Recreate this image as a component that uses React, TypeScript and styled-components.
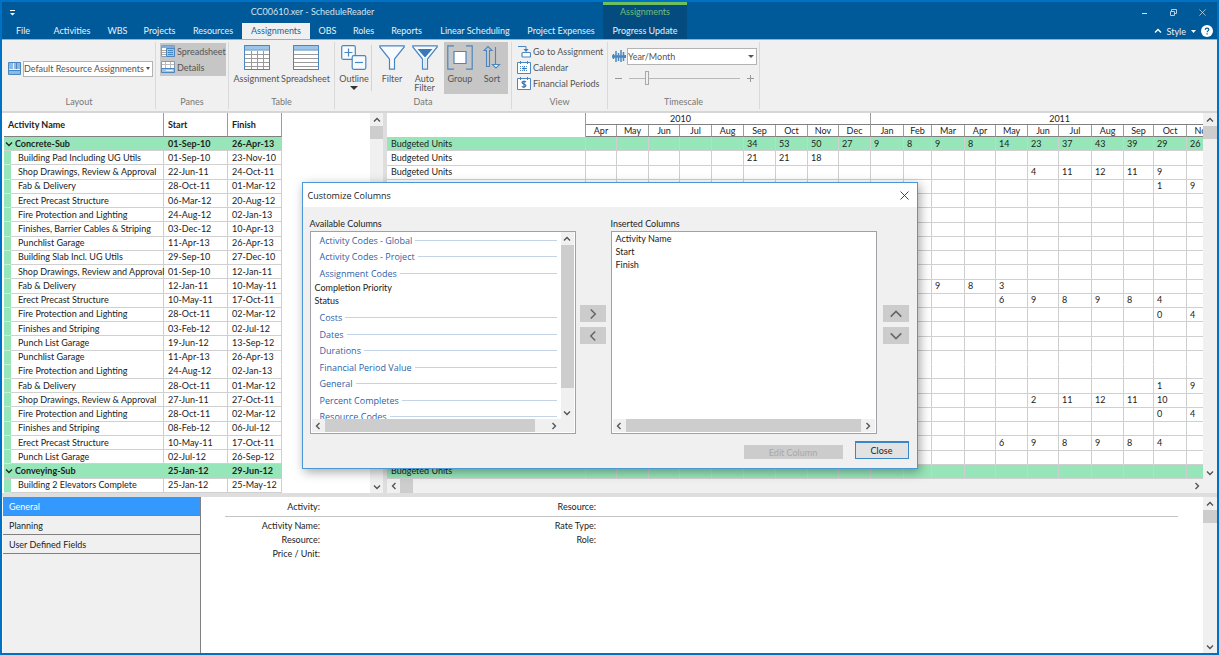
import React from 'react';
import styled, { createGlobalStyle, css } from 'styled-components';

const ui = `"Open Sans", "Noto Sans", sans-serif`;
const grid = `Lato, "Open Sans", sans-serif`;
const GREEN = '#97e6b9';
const BLUE = '#4a86c0';

const GlobalStyle = createGlobalStyle`
  *, *::before, *::after { box-sizing: border-box; }
  body { margin: 0; font-family: ${grid}; font-size: 9px; color: #222; background: #fff; }
  button, select, input { font: inherit; color: inherit; margin: 0; padding: 0; border: 0; background: none; }
  svg { display: block; flex: none; }
`;

const Frame = styled.div`
  height: 100vh;
  min-height: 400px;
  display: flex;
  flex-direction: column;
  border: 2px solid #0072c6;
  background: #f0f0f0;
  overflow: hidden;
  position: relative;
`;

/* ---------- title bar and tabs ---------- */

const TitleBar = styled.header`
  flex: 0 0 21px;
  display: flex;
  align-items: stretch;
  background: #005998;
  color: #d5e3ef;
`;
const QuickAccess = styled.button`
  width: 20px;
  display: flex;
  align-items: center;
  justify-content: center;
`;
const Title = styled.h1`
  width: 581px;
  margin: 0;
  font-size: 9px;
  font-weight: 400;
  line-height: 20px;
  text-align: center;
`;
const ContextTitle = styled.div`
  width: 84px;
  border-top: 3px solid #6fc05c;
  background: #044c80;
  color: #74bd78;
  text-align: center;
  line-height: 14px;
`;
const WindowButtons = styled.div`
  margin-left: auto;
  display: flex;
`;
const WindowButton = styled.button`
  width: 29px;
  display: flex;
  align-items: center;
  justify-content: center;
`;
const TabBar = styled.nav`
  flex: 0 0 16px;
  display: flex;
  background: #005998;
  color: #e8f0f7;
`;
const Tab = styled.button<{ $w: number; $active?: boolean; $context?: boolean }>`
  width: ${p => p.$w}px;
  line-height: 16px;
  white-space: nowrap;
  ${p => p.$active && css`background: #f0f0f0; color: #1f5f9c;`}
  ${p => p.$context && css`background: #044c80;`}
`;
const TabTools = styled.div`
  margin-left: auto;
  display: flex;
  align-items: center;
  gap: 5px;
  padding-right: 4px;
`;
const ToolButton = styled.button`
  display: flex;
  align-items: center;
  gap: 5px;
`;

/* ---------- ribbon ---------- */

const Ribbon = styled.div`
  flex: 0 0 74px;
  display: flex;
  border-top: 1px solid #8fb2cf;
  border-bottom: 2px solid #d6d6d6;
  padding: 2px 0 2px 1px;
  color: #555;
`;
const RibbonGroup = styled.section<{ $w: number }>`
  width: ${p => p.$w}px;
  display: flex;
  flex-direction: column;
  border-right: 1px solid #d9d9d9;
`;
const GroupBody = styled.div<{ $center?: boolean }>`
  flex: 1;
  display: flex;
  align-items: ${p => (p.$center ? 'center' : 'flex-start')};
`;
const GroupLabel = styled.h2`
  margin: 0;
  font-size: 9px;
  font-weight: 400;
  line-height: 14px;
  color: #777;
  text-align: center;
`;
const LayoutPicker = styled.label`
  display: flex;
  align-items: center;
  gap: 2px;
  padding-left: 5px;
`;
const Combo = styled.span<{ $w: number; $h: number }>`
  position: relative;
  width: ${p => p.$w}px;
  height: ${p => p.$h}px;
  display: flex;
  border: 1px solid #b3b3b3;
  background: #fff;
  > svg { position: absolute; right: 2px; top: 50%; margin-top: -2px; pointer-events: none; }
`;
const ComboSelect = styled.select`
  appearance: none;
  width: 100%;
  color: #555;
`;
const PaneToggles = styled.div`
  margin: 1px 0 0 4px;
  width: 66px;
  height: 33px;
  background: #c6c6c6;
`;
const SmallButton = styled.button`
  display: flex;
  align-items: center;
  gap: 2px;
  height: 16px;
  padding-left: 1px;
  white-space: nowrap;
`;
const BigButton = styled.button<{ $w: number; $pressed?: boolean }>`
  width: ${p => p.$w}px;
  height: 52px;
  display: flex;
  flex-direction: column;
  align-items: center;
  justify-content: flex-start;
  padding-top: 3px;
  line-height: 9px;
  white-space: nowrap;
  ${p => p.$pressed && css`background: #c6c6c6;`}
  > svg { margin-bottom: 4px; }
  > svg + span + svg { margin: 3px 0 0; }
`;
const ShortRule = styled.span`
  width: 1px;
  height: 46px;
  margin: 3px 7px 0 0;
  background: #d4d4d4;
`;
const ButtonRow = styled.div<{ $pad: number }>`
  display: flex;
  padding-left: ${p => p.$pad}px;
`;
const ViewButtons = styled.div`
  padding: 1px 0 0 4px;
`;
const Timescale = styled.div`
  padding: 6px 0 0 4px;
`;
const TimescaleRow = styled.label`
  display: flex;
  align-items: center;
  gap: 1px;
`;
const ZoomRow = styled.div`
  display: flex;
  align-items: center;
  gap: 7px;
  padding: 6px 0 0 3px;
`;
const ZoomButton = styled.button`
  width: 7px;
  height: 14px;
  display: flex;
  align-items: center;
`;
const Slider = styled.input`
  appearance: none;
  width: 111px;
  height: 14px;
  background: linear-gradient(#b8b8b8, #b8b8b8) 0 50% / 100% 1px no-repeat;
  &::-webkit-slider-thumb {
    appearance: none;
    width: 4px;
    height: 14px;
    background: #f0f0f0;
    border: 1px solid #a8a8a8;
  }
`;

/* ---------- scroll bars ---------- */

const BarTrack = styled.div<{ $horizontal?: boolean; $size: number }>`
  flex: none;
  display: flex;
  flex-direction: ${p => (p.$horizontal ? 'row' : 'column')};
  ${p => (p.$horizontal ? 'height' : 'width')}: ${p => p.$size}px;
  background: #f0f0f0;
`;
const BarButton = styled.button`
  flex: 0 0 13px;
  display: flex;
  align-items: center;
  justify-content: center;
`;
const BarThumb = styled.div<{ $grow: number }>`
  flex: ${p => (p.$grow ? `${p.$grow} 1 0` : '0 0 13px')};
  background: #cdcdcd;
`;
const BarRest = styled.div<{ $grow: number }>`
  flex: ${p => p.$grow} 1 0;
`;

const arrows: Record<string, string> = {
  up: 'M1 5.5 4 2.5 7 5.5',
  down: 'M1 2.5 4 5.5 7 2.5',
  left: 'M5.5 1 2.5 4 5.5 7',
  right: 'M2.5 1 5.5 4 2.5 7',
};
const Arrow = ({ dir, size = 8, color = '#505050', weight = 1.3 }: { dir: string; size?: number; color?: string; weight?: number }) => (
  <svg width={size} height={size} viewBox="0 0 8 8" fill="none" stroke={color} strokeWidth={weight}>
    <path d={arrows[dir]} />
  </svg>
);

const ScrollBar = ({ horizontal, size = 13, thumb = 0, rest = 1 }: { horizontal?: boolean; size?: number; thumb?: number; rest?: number }) => (
  <BarTrack $horizontal={horizontal} $size={size}>
    <BarButton aria-label={horizontal ? 'Scroll left' : 'Scroll up'}><Arrow dir={horizontal ? 'left' : 'up'} /></BarButton>
    <BarThumb $grow={thumb} />
    <BarRest $grow={rest} />
    <BarButton aria-label={horizontal ? 'Scroll right' : 'Scroll down'}><Arrow dir={horizontal ? 'right' : 'down'} /></BarButton>
  </BarTrack>
);

/* ---------- work area ---------- */

const Workspace = styled.main`
  flex: 1 1 0;
  min-height: 0;
  display: flex;
  padding-left: 2px;
  background: #fff;
`;
const ActivityPane = styled.section`
  flex: 0 0 379px;
  display: flex;
  justify-content: space-between;
  background: #fff;
`;
const Splitter = styled.div`
  flex: 0 0 4px;
  background: #dedede;
`;
const UsagePane = styled.section`
  flex: 1 1 0;
  min-width: 0;
  display: flex;
`;
const UsageMain = styled.div`
  flex: 1 1 0;
  min-width: 0;
  display: flex;
  flex-direction: column;
`;
const UsageClip = styled.div`
  flex: 1 1 0;
  min-height: 0;
  overflow: hidden;
`;
const UsageSide = styled.div`
  flex: 0 0 14px;
  display: flex;
  padding-bottom: 14px;
  background: #f0f0f0;
`;
const Sheet = styled.table<{ $w: number }>`
  width: ${p => p.$w}px;
  height: 100%;
  table-layout: fixed;
  border-spacing: 0;
  line-height: 12px;
  td, th { padding: 0; white-space: nowrap; }
`;
const HeadCell = styled.th`
  border-right: 1px solid #9c9c9c;
  border-bottom: 1px solid #808080;
  text-align: left;
  && { padding-left: 4px; }
`;
const HeadRow = styled.tr<{ $h: number }>`
  height: ${p => p.$h}px;
`;
const YearCell = styled.th<{ $before?: number; $after?: number }>`
  border-right: 1px solid #9c9c9c;
  border-bottom: 1px solid #808080;
  font-weight: 400;
  line-height: 11px;
  && { padding: 0 ${p => p.$after ?? 0}px 0 ${p => p.$before ?? 0}px; }
`;
const MonthCell = styled.th`
  border-right: 1px solid #9c9c9c;
  border-bottom: 1px solid #808080;
  font-weight: 400;
  line-height: 11px;
`;
const CornerCell = styled.th`
  border-right: 1px solid #9c9c9c;
`;
const Row = styled.tr<{ $group?: boolean; $open?: boolean }>`
  ${p => p.$group && css`background: ${GREEN};`}
  td { border-bottom: 1px solid ${p => (p.$open ? 'transparent' : '#d0d0d0')}; }
`;
const Strip = styled.td`
  background: ${GREEN};
  && { border-bottom-color: #c3f0d6; }
`;
const NameCell = styled.td`
  border-right: 1px solid #cfcfcf;
  && { padding-left: 7px; }
`;
const GroupCell = styled.td`
  font-weight: 700;
  > span { display: flex; align-items: center; gap: 2px; padding-left: 1px; }
`;
const DateCell = styled.td<{ $bold?: boolean }>`
  border-right: 1px solid ${p => (p.$bold ? GREEN : '#cfcfcf')};
  font-weight: ${p => (p.$bold ? 700 : 400)};
  && { padding-left: 4px; }
`;
const UnitCell = styled.td<{ $label?: boolean }>`
  border-right: 1px solid #cfcfcf;
  && { padding-left: ${p => (p.$label ? 4 : 3)}px; }
`;

/* ---------- details ---------- */

const HSplitter = styled.div`
  flex: 0 0 4px;
  background: #dedede;
`;
const Details = styled.section`
  flex: 0 0 156px;
  display: flex;
  padding-left: 1px;
  background: #fff;
`;
const DetailNav = styled.nav`
  flex: 0 0 198px;
  display: flex;
  flex-direction: column;
  border-right: 1px solid #808080;
  background: #f0f0f0;
`;
const DetailTab = styled.button<{ $active?: boolean }>`
  height: 19px;
  padding: 1px 0 0 6px;
  border-bottom: 1px solid #808080;
  text-align: left;
  ${p => p.$active && css`background: #3399ff; color: #fff;`}
`;
const DetailForm = styled.div`
  flex: 1;
  padding: 1px 25px 0 24px;
`;
const DetailRow = styled.div<{ $head?: boolean }>`
  display: grid;
  grid-template-columns: 95px 276px 1fr;
  text-align: right;
  line-height: 14px;
  ${p => p.$head && css`
    line-height: 18px;
    border-bottom: 1px solid #c4c4c4;
    margin-bottom: 2px;
  `}
`;

/* ---------- dialog ---------- */

const Dialog = styled.div`
  position: absolute;
  top: 180px;
  left: 50%;
  width: 616px;
  margin-left: -308px;
  border: 1px solid #4a98d8;
  background: #f0f0f0;
  box-shadow: 2px 3px 10px rgba(0, 0, 0, 0.35);
  color: #222;
`;
const DialogTitle = styled.header`
  height: 24px;
  display: flex;
  align-items: center;
  justify-content: space-between;
  padding: 0 8px 0 5px;
  background: #fff;
  h2 { margin: 0; font: 400 9px ${ui}; }
`;
const DialogBody = styled.div`
  display: flex;
  padding: 9px 7px 0 7px;
`;
const ListColumn = styled.div`
  width: 266px;
  h3 { margin: 0; font-size: 9px; font-weight: 400; line-height: 15px; }
`;
const ListBox = styled.div`
  height: 203px;
  display: flex;
  flex-direction: column;
  border: 1px solid #a0a0a8;
  padding: 0 1px 1px;
  background: #fff;
`;
const ListMiddle = styled.div`
  flex: 1 1 0;
  min-height: 0;
  display: flex;
`;
const Items = styled.ul`
  flex: 1;
  margin: 0;
  padding: 0 4px 0 3px;
  list-style: none;
  overflow: hidden;
`;
const Item = styled.li`
  height: 13px;
  line-height: 13px;
`;
const ItemGroup = styled.li`
  height: 16px;
  display: flex;
  align-items: center;
  gap: 3px;
  padding-left: 5px;
  font-family: ${ui};
  color: #2f5fa8;
  white-space: nowrap;
  &:nth-child(even) { height: 17px; }
  li:not(&) + & { margin-top: 2px; }
  &::after { content: ''; flex: 1; height: 1px; background: #c5d3e8; }
`;
const HBarRow = styled.div<{ $inset?: boolean }>`
  display: flex;
  background: #f0f0f0;
  padding-right: ${p => (p.$inset ? 13 : 0)}px;
  > div { flex: 1; }
`;
const MoveButtons = styled.div`
  width: 35px;
  display: flex;
  flex-direction: column;
  align-items: center;
  gap: 5px;
  padding-top: 89px;
  &:last-child { width: 32px; align-items: flex-end; }
`;
const MoveButton = styled.button`
  width: 26px;
  height: 17px;
  display: flex;
  align-items: center;
  justify-content: center;
  background: #cccccc;
`;
const DialogActions = styled.footer`
  display: flex;
  justify-content: flex-end;
  align-items: flex-end;
  gap: 12px;
  padding: 7px 8px 9px;
`;
const EditButton = styled.button`
  width: 99px;
  height: 14px;
  background: #cccccc;
  color: #a8a8a8;
`;
const CloseButton = styled.button`
  width: 54px;
  height: 18px;
  border: 1px solid #3a87c8;
  border-top-width: 2px;
  background: #e2e2e2;
`;

/* ---------- icons ---------- */

const Caret = ({ w = 5, color = '#555' }: { w?: number; color?: string }) => (
  <svg width={w} height={w > 6 ? 4 : 3} viewBox="0 0 8 5" preserveAspectRatio="none"><path d="M0 0h8L4 5z" fill={color} /></svg>
);
const LayoutIcon = () => (
  <svg width="13" height="13" viewBox="0 0 13 13">
    <path d="M.5.5h12v12H.5z" fill="#8db9e2" stroke={BLUE} />
    <path d="M5.500 1v6.500M1 7.500h11" stroke="#e6f1fa" />
    <path d="M8.500 1v6M1 8.500h11" stroke={BLUE} />
  </svg>
);
const SpreadsheetPaneIcon = () => (
  <svg width="14" height="14" viewBox="0 0 14 14">
    <path d="M.5 1.500h13v11H.5z" fill="#fff" stroke="#8a9aa8" />
    <path d="M1 2h12v2H1z" fill="#7eaedb" />
    <path d="M1 6.500h4M1 8.500h4M1 10.500h4" stroke="#aaa" />
    <path d="M5.500 4.500h8v8h-8z" fill="#9cc5ea" stroke={BLUE} />
    <path d="M7 6.500h5M7 8.500h5M7 10.500h5" stroke={BLUE} />
  </svg>
);
const DetailsPaneIcon = () => (
  <svg width="14" height="14" viewBox="0 0 14 14">
    <path d="M.5 1.500h13v11H.5z" fill="#fff" stroke="#8a9aa8" />
    <path d="M1 4.500h12M4.500 2v6M9.500 2v6" stroke="#bbb" />
    <path d="M.5 8.500h13v4H.5z" fill="#9cc5ea" stroke={BLUE} />
    <path d="M5 10.500h7" stroke="#e6f1fa" />
  </svg>
);
const TableIcon = ({ columns }: { columns?: boolean }) => (
  <svg width="26" height="25" viewBox="0 0 26 25">
    <path d="M.5.5h25v24H.5z" fill="#fff" stroke={BLUE} />
    <path d="M1 1h24v3.500H1z" fill="#9cc5ea" />
    <path d="M1 5h24" stroke={BLUE} />
    <path d="M1 9.500h24M1 13.500h24M1 17.500h24M1 21.500h24" stroke="#9a9a9a" />
    {columns && <path d="M7.500 6v18M13.500 6v18M19.500 6v18" stroke="#9a9a9a" />}
    <path d="M.5.5h25v24H.5z" fill="none" stroke={BLUE} />
  </svg>
);
const OutlineIcon = () => (
  <svg width="26" height="25" viewBox="0 0 26 25" fill="#f8fbfe" stroke={BLUE} strokeWidth="1.200">
    <rect x=".7" y=".7" width="13.600" height="13.600" rx="1.500" />
    <path d="M7.500 3.500v8M3.500 7.500h8" />
    <rect x="11.200" y="10.700" width="13.600" height="13.600" rx="1.500" />
    <path d="M14 17.500h8" />
  </svg>
);
const FilterIcon = ({ auto }: { auto?: boolean }) => (
  <svg width="26" height="25" viewBox="0 0 26 25" fill="none" stroke={BLUE} strokeWidth="1.200">
    <path d="M.8.8h24.400v1.200L15.500 14v10.200h-5V14L.8 2z" fill="#f8fbfe" />
    {auto && <path d="M5.500 4h15L13.500 12h-1z" fill="#3b78b5" stroke="none" />}
    {auto && <path d="M13 13v10" stroke="#c8dff2" />}
  </svg>
);
const GroupIcon = () => (
  <svg width="26" height="25" viewBox="0 0 26 25" fill="none" stroke={BLUE} strokeWidth="1.200">
    <path d="M7 .8H.8v23.400H7M19 .8h6.200v23.400H19" />
    <path d="M7 6.500h12v12H7z" fill="#fff" />
  </svg>
);
const SortIcon = () => (
  <svg width="18" height="25" viewBox="0 0 18 25" fill="none" stroke={BLUE} strokeWidth="1.100">
    <path d="M3.500 21.500V5.500H1L5 1.500l4 4H6.500v16z" />
    <path d="M12.500 2v17.500M9.500 19.500l3.500 3.500 3.500-3.500z" fill="#fff" />
  </svg>
);
const GoToIcon = () => (
  <svg width="14" height="13" viewBox="0 0 14 13" fill="none" stroke={BLUE}>
    <path d="M1 1.500h8v4" />
    <path d="M6.500 4h5L9 7z" fill="#3b78b5" stroke="none" />
    <rect x="5" y="7.500" width="8.500" height="4.500" rx="1" fill="#fff" strokeWidth="1.200" />
  </svg>
);
const CalendarIcon = ({ money }: { money?: boolean }) => (
  <svg width="14" height="13" viewBox="0 0 14 13" fill="none" stroke={BLUE}>
    <path d="M.5 1.500h13v11H.5z" fill="#fff" />
    <path d="M3.500 0v3M10.500 0v3" />
    {money ? (
      <path d="M9 5C8 4 5 4 5 5.600S9 7 9 8.600 6 10.500 4.800 9.300M7 3.500v7.500" stroke="#3b78b5" strokeWidth="1.200" />
    ) : (
      <>
        <path d="M3 5.500h8M3 7.500h8M3 9.500h8" strokeDasharray="1 1" />
        <path d="M7 5.500v4M5 7.500h4" stroke="#3b78b5" />
      </>
    )}
  </svg>
);
const WaveIcon = () => (
  <svg width="14" height="13" viewBox="0 0 14 13" fill="none" stroke={BLUE} strokeWidth="1.500">
    <path d="M0 6.500h14" strokeWidth="2.500" />
    <path d="M1.500 4v5M4 1v11M6.500 3v8M9 0v12M11.500 2v9M13.300 5v3" />
  </svg>
);
const CloseIcon = ({ size, color }: { size: number; color: string }) => (
  <svg width={size} height={size} viewBox="0 0 9 9" stroke={color} strokeWidth=".9"><path d="M.5.5l8 8M8.500.5l-8 8" /></svg>
);

/* ---------- data ---------- */

const tabs: [string, number][] = [
  ['File', 42], ['Activities', 56], ['WBS', 35], ['Projects', 49], ['Resources', 58], ['Assignments', 68],
  ['OBS', 35], ['Roles', 37], ['Reports', 49], ['Linear Scheduling', 88], ['Project Expenses', 84], ['Progress Update', 84],
];

const monthNames = ['Jan', 'Feb', 'Mar', 'Apr', 'May', 'Jun', 'Jul', 'Aug', 'Sep', 'Oct', 'Nov', 'Dec'];
const monthWidths = [31, 32, 31, 32, 32, 32, 32, 31, 32, 33, 28, 33, 31, 32, 31, 33, 32, 30, 33, 32];
const FIRST_MONTH = 3;

interface Activity {
  name: string;
  start: string;
  finish: string;
  group?: boolean;
  open?: boolean;
  from?: number;
  units?: number[];
}

const activities: Activity[] = [
  { name: 'Concrete-Sub', start: '01-Sep-10', finish: '26-Apr-13', group: true, from: 5, units: [34, 53, 50, 27, 9, 8, 9, 8, 14, 23, 37, 43, 39, 29, 26] },
  { name: 'Building Pad Including UG Utils', start: '01-Sep-10', finish: '23-Nov-10', from: 5, units: [21, 21, 18] },
  { name: 'Shop Drawings, Review & Approval', start: '22-Jun-11', finish: '24-Oct-11', from: 14, units: [4, 11, 12, 11, 9] },
  { name: 'Fab & Delivery', start: '28-Oct-11', finish: '01-Mar-12', from: 18, units: [1, 9] },
  { name: 'Erect Precast Structure', start: '06-Mar-12', finish: '20-Aug-12' },
  { name: 'Fire Protection and Lighting', start: '24-Aug-12', finish: '02-Jan-13' },
  { name: 'Finishes, Barrier Cables & Striping', start: '03-Dec-12', finish: '10-Apr-13' },
  { name: 'Punchlist Garage', start: '11-Apr-13', finish: '26-Apr-13' },
  { name: 'Building Slab Incl. UG Utils', start: '29-Sep-10', finish: '27-Dec-10' },
  { name: 'Shop Drawings, Review and Approval', start: '01-Sep-10', finish: '12-Jan-11' },
  { name: 'Fab & Delivery', start: '12-Jan-11', finish: '10-May-11', from: 11, units: [9, 8, 3] },
  { name: 'Erect Precast Structure', start: '10-May-11', finish: '17-Oct-11', from: 13, units: [6, 9, 8, 9, 8, 4] },
  { name: 'Fire Protection and Lighting', start: '28-Oct-11', finish: '02-Mar-12', from: 18, units: [0, 4] },
  { name: 'Finishes and Striping', start: '03-Feb-12', finish: '02-Jul-12' },
  { name: 'Punch List Garage', start: '19-Jun-12', finish: '13-Sep-12' },
  { name: 'Punchlist Garage', start: '11-Apr-13', finish: '26-Apr-13', open: true },
  { name: 'Fire Protection and Lighting', start: '24-Aug-12', finish: '02-Jan-13' },
  { name: 'Fab & Delivery', start: '28-Oct-11', finish: '01-Mar-12', from: 18, units: [1, 9] },
  { name: 'Shop Drawings, Review & Approval', start: '27-Jun-11', finish: '27-Oct-11', from: 14, units: [2, 11, 12, 11, 10] },
  { name: 'Fire Protection and Lighting', start: '28-Oct-11', finish: '02-Mar-12', from: 18, units: [0, 4] },
  { name: 'Finishes and Striping', start: '08-Feb-12', finish: '06-Jul-12' },
  { name: 'Erect Precast Structure', start: '10-May-11', finish: '17-Oct-11', from: 13, units: [6, 9, 8, 9, 8, 4] },
  { name: 'Punch List Garage', start: '02-Jul-12', finish: '26-Sep-12' },
  { name: 'Conveying-Sub', start: '25-Jan-12', finish: '29-Jun-12', group: true },
  { name: 'Building 2 Elevators Complete', start: '25-Jan-12', finish: '25-May-12' },
];

const available: { text: string; item?: boolean }[] = [
  { text: 'Activity Codes - Global' },
  { text: 'Activity Codes - Project' },
  { text: 'Assignment Codes' },
  { text: 'Completion Priority', item: true },
  { text: 'Status', item: true },
  { text: 'Costs' },
  { text: 'Dates' },
  { text: 'Durations' },
  { text: 'Financial Period Value' },
  { text: 'General' },
  { text: 'Percent Completes' },
  { text: 'Resource Codes' },
];

/* ---------- parts ---------- */

const ActivityTable = () => (
  <Sheet $w={278}>
    <colgroup>
      <col style={{ width: 7 }} /><col style={{ width: 153 }} /><col style={{ width: 64 }} /><col style={{ width: 54 }} />
    </colgroup>
    <thead>
      <HeadRow $h={24}>
        <HeadCell colSpan={2}>Activity Name</HeadCell>
        <HeadCell>Start</HeadCell>
        <HeadCell>Finish</HeadCell>
      </HeadRow>
    </thead>
    <tbody>
      {activities.map((a, i) => (
        <Row key={i} $group={a.group} $open={a.open}>
          {a.group ? (
            <GroupCell colSpan={2}><span><Arrow dir="down" color="#222" />{a.name}</span></GroupCell>
          ) : (
            <><Strip /><NameCell>{a.name}</NameCell></>
          )}
          <DateCell $bold={a.group}>{a.start}</DateCell>
          <DateCell $bold={a.group}>{a.finish}</DateCell>
        </Row>
      ))}
    </tbody>
  </Sheet>
);

const UsageTable = () => (
  <Sheet $w={199 + monthWidths.reduce((s, w) => s + w, 0)}>
    <colgroup>
      <col style={{ width: 199 }} />
      {monthWidths.map((w, i) => <col key={i} style={{ width: w }} />)}
    </colgroup>
    <thead>
      <HeadRow $h={12}>
        <CornerCell rowSpan={2} />
        <YearCell colSpan={9} $after={95}>2010</YearCell>
        <YearCell colSpan={11} $before={30}>2011</YearCell>
      </HeadRow>
      <HeadRow $h={12}>
        {monthWidths.map((_, i) => <MonthCell key={i}>{monthNames[(i + FIRST_MONTH) % 12]}</MonthCell>)}
      </HeadRow>
    </thead>
    <tbody>
      {activities.slice(0, 24).map((a, i) => (
        <Row key={i} $group={a.group} $open={a.open}>
          <UnitCell $label>Budgeted Units</UnitCell>
          {monthWidths.map((_, m) => <UnitCell key={m}>{a.units?.[m - (a.from ?? 0)]}</UnitCell>)}
        </Row>
      ))}
    </tbody>
  </Sheet>
);

const CustomizeColumns = () => (
  <Dialog role="dialog" aria-labelledby="dialog-title">
    <DialogTitle>
      <h2 id="dialog-title">Customize Columns</h2>
      <button aria-label="Close dialog"><CloseIcon size={9} color="#333" /></button>
    </DialogTitle>
    <DialogBody>
      <ListColumn>
        <h3>Available Columns</h3>
        <ListBox>
          <ListMiddle>
            <Items>
              {available.map(a => (a.item ? <Item key={a.text}>{a.text}</Item> : <ItemGroup key={a.text}>{a.text}</ItemGroup>))}
            </Items>
            <ScrollBar thumb={142} rest={18} />
          </ListMiddle>
          <HBarRow $inset><ScrollBar horizontal thumb={210} rest={13} /></HBarRow>
        </ListBox>
      </ListColumn>
      <MoveButtons>
        <MoveButton aria-label="Add column"><Arrow dir="right" size={12} color="#666" weight={1} /></MoveButton>
        <MoveButton aria-label="Remove column"><Arrow dir="left" size={12} color="#666" weight={1} /></MoveButton>
      </MoveButtons>
      <ListColumn>
        <h3>Inserted Columns</h3>
        <ListBox>
          <ListMiddle>
            <Items>
              <Item>Activity Name</Item>
              <Item>Start</Item>
              <Item>Finish</Item>
            </Items>
          </ListMiddle>
          <HBarRow><ScrollBar horizontal thumb={235} rest={1} /></HBarRow>
        </ListBox>
      </ListColumn>
      <MoveButtons>
        <MoveButton aria-label="Move up"><Arrow dir="up" size={14} color="#666" weight={0.9} /></MoveButton>
        <MoveButton aria-label="Move down"><Arrow dir="down" size={14} color="#666" weight={0.9} /></MoveButton>
      </MoveButtons>
    </DialogBody>
    <DialogActions>
      <EditButton disabled>Edit Column</EditButton>
      <CloseButton>Close</CloseButton>
    </DialogActions>
  </Dialog>
);

export default function App() {
  return (
    <>
      <GlobalStyle />
      <Frame>
        <TitleBar>
          <QuickAccess aria-label="Customize quick access">
            <svg width="5" height="6" viewBox="0 0 5 6"><path d="M0 0h5v1H0zM0 3h5L2.500 5.500z" fill="#fff" /></svg>
          </QuickAccess>
          <Title>CC00610.xer - ScheduleReader</Title>
          <ContextTitle>Assignments</ContextTitle>
          <WindowButtons>
            <WindowButton aria-label="Minimize"><svg width="5" height="5" viewBox="0 0 5 5"><path d="M0 3.500h5" stroke="#d5e3ef" /></svg></WindowButton>
            <WindowButton aria-label="Restore">
              <svg width="7" height="7" viewBox="0 0 7 7" fill="none" stroke="#b8cde0"><path d="M.5 2.500h4v4h-4zM1.500 2V.5h5v4H5" /></svg>
            </WindowButton>
            <WindowButton aria-label="Close window"><CloseIcon size={7} color="#d5e3ef" /></WindowButton>
          </WindowButtons>
        </TitleBar>
        <TabBar>
          {tabs.map(([name, w]) => (
            <Tab key={name} $w={w} $active={name === 'Assignments'} $context={name === 'Progress Update'}>{name}</Tab>
          ))}
          <TabTools>
            <ToolButton><Arrow dir="up" color="#fff" />Style<Caret color="#fff" /></ToolButton>
            <ToolButton aria-label="Help">
              <svg width="12" height="12" viewBox="0 0 12 12">
                <circle cx="6" cy="6" r="6" fill="#fff" />
                <path d="M4.300 4.800c0-2.400 3.500-2.200 3.500-.2 0 1.300-1.700 1.300-1.700 2.700M6.100 8.300v1.300" fill="none" stroke="#005998" strokeWidth="1.200" />
              </svg>
            </ToolButton>
          </TabTools>
        </TabBar>

        <Ribbon>
          <RibbonGroup $w={153}>
            <GroupBody $center>
              <LayoutPicker>
                <LayoutIcon />
                <Combo $w={130} $h={16}>
                  <ComboSelect aria-label="Layout" defaultValue="d"><option value="d">Default Resource Assignments</option></ComboSelect>
                  <Caret w={4} />
                </Combo>
              </LayoutPicker>
            </GroupBody>
            <GroupLabel>Layout</GroupLabel>
          </RibbonGroup>
          <RibbonGroup $w={73}>
            <GroupBody>
              <PaneToggles>
                <SmallButton><SpreadsheetPaneIcon />Spreadsheet</SmallButton>
                <SmallButton><DetailsPaneIcon />Details</SmallButton>
              </PaneToggles>
            </GroupBody>
            <GroupLabel>Panes</GroupLabel>
          </RibbonGroup>
          <RibbonGroup $w={106}>
            <GroupBody>
              <ButtonRow $pad={3}>
                <BigButton $w={49}><TableIcon columns /><span>Assignment</span></BigButton>
                <BigButton $w={49}><TableIcon /><span>Spreadsheet</span></BigButton>
              </ButtonRow>
            </GroupBody>
            <GroupLabel>Table</GroupLabel>
          </RibbonGroup>
          <RibbonGroup $w={177}>
            <GroupBody>
              <ButtonRow $pad={2}>
                <BigButton $w={34}><OutlineIcon /><span>Outline</span><Caret w={8} color="#333" /></BigButton>
                <ShortRule />
                <BigButton $w={26}><FilterIcon /><span>Filter</span></BigButton>
                <BigButton $w={39}><FilterIcon auto /><span>Auto<br />Filter</span></BigButton>
                <BigButton $w={32} $pressed><GroupIcon /><span>Group</span></BigButton>
                <BigButton $w={32} $pressed><SortIcon /><span>Sort</span></BigButton>
              </ButtonRow>
            </GroupBody>
            <GroupLabel>Data</GroupLabel>
          </RibbonGroup>
          <RibbonGroup $w={96}>
            <GroupBody>
              <ViewButtons>
                <SmallButton><GoToIcon />Go to Assignment</SmallButton>
                <SmallButton><CalendarIcon />Calendar</SmallButton>
                <SmallButton><CalendarIcon money />Financial Periods</SmallButton>
              </ViewButtons>
            </GroupBody>
            <GroupLabel>View</GroupLabel>
          </RibbonGroup>
          <RibbonGroup $w={152}>
            <GroupBody>
              <Timescale>
                <TimescaleRow>
                  <WaveIcon />
                  <Combo $w={130} $h={17}>
                    <ComboSelect aria-label="Timescale" defaultValue="m"><option value="m">Year/Month</option></ComboSelect>
                    <Caret w={6} />
                  </Combo>
                </TimescaleRow>
                <ZoomRow>
                  <ZoomButton aria-label="Zoom out"><svg width="7" height="7" viewBox="0 0 7 7"><path d="M0 3.500h7" stroke="#999" /></svg></ZoomButton>
                  <Slider type="range" aria-label="Zoom" min={0} max={100} defaultValue={15} />
                  <ZoomButton aria-label="Zoom in"><svg width="7" height="7" viewBox="0 0 7 7"><path d="M0 3.500h7M3.500 0v7" stroke="#999" /></svg></ZoomButton>
                </ZoomRow>
              </Timescale>
            </GroupBody>
            <GroupLabel>Timescale</GroupLabel>
          </RibbonGroup>
        </Ribbon>

        <Workspace>
          <ActivityPane>
            <ActivityTable />
            <ScrollBar rest={1} />
          </ActivityPane>
          <Splitter />
          <UsagePane>
            <UsageMain>
              <UsageClip><UsageTable /></UsageClip>
              <ScrollBar horizontal size={14} />
            </UsageMain>
            <UsageSide><ScrollBar size={14} /></UsageSide>
          </UsagePane>
        </Workspace>
        <HSplitter />
        <Details>
          <DetailNav>
            <DetailTab $active>General</DetailTab>
            <DetailTab>Planning</DetailTab>
            <DetailTab>User Defined Fields</DetailTab>
          </DetailNav>
          <DetailForm>
            <DetailRow $head><span>Activity:</span><span>Resource:</span></DetailRow>
            <DetailRow><span>Activity Name:</span><span>Rate Type:</span></DetailRow>
            <DetailRow><span>Resource:</span><span>Role:</span></DetailRow>
            <DetailRow><span>Price / Unit:</span></DetailRow>
          </DetailForm>
          <ScrollBar size={14} />
        </Details>

        <CustomizeColumns />
      </Frame>
    </>
  );
}
